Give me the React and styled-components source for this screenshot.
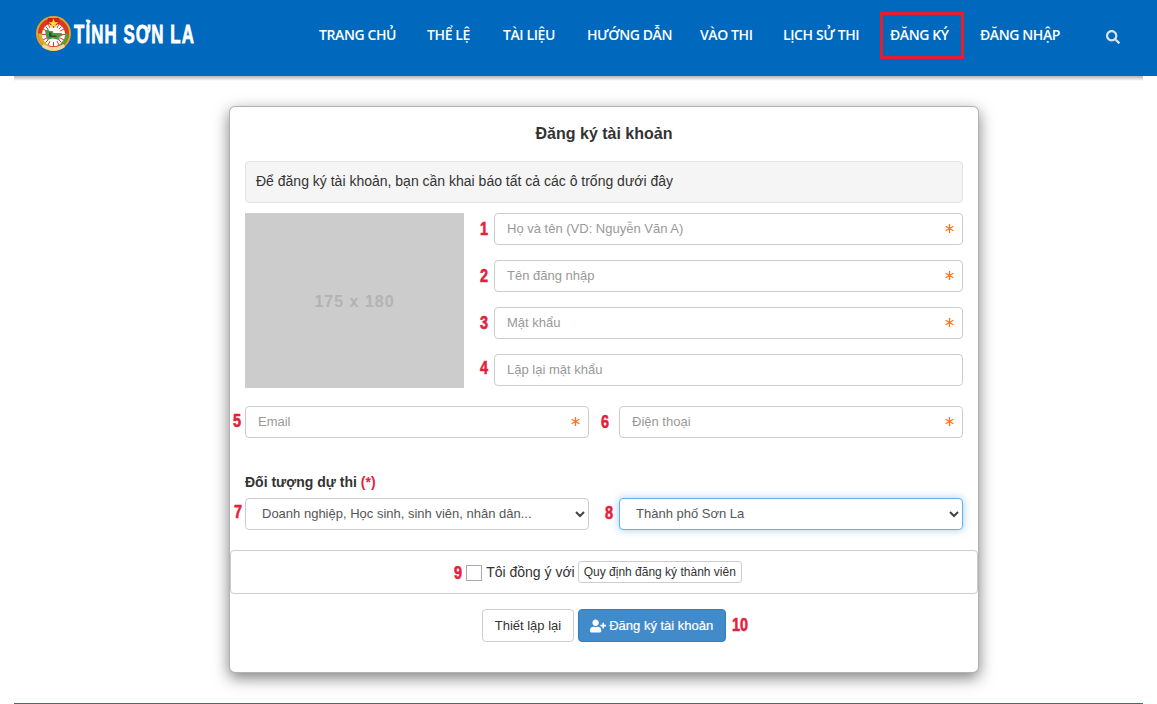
import React from "react";
import styled, { createGlobalStyle, css } from "styled-components";
import { FaSearch, FaUserPlus } from "react-icons/fa";

const Global = createGlobalStyle`
  html, body { margin: 0; padding: 0; background: #fff; }
  body { font-family: "Liberation Sans", Arial, sans-serif; font-size: 14px; color: #333; overflow: hidden; }
  *, *::before, *::after { box-sizing: border-box; }
`;

const Page = styled.div`
  width: 1157px;
  height: 704px;
  display: flex;
  flex-direction: column;
`;
const Header = styled.header`
  height: 76px;
  background: #0068bd;
  display: flex;
  align-items: flex-start;
  padding-left: 36px;
  flex: none;
`;
const Brand = styled.a`
  width: 283px;
  height: 76px;
  display: flex;
  align-items: flex-start;
  padding-top: 16px;
  flex: none;
`;
const BrandText = styled.span`
  display: inline-block;
  margin: 3px 0 0 3px;
  font: 700 25px/30px "Liberation Sans", Arial, sans-serif;
  color: #fff;
  letter-spacing: 1.6px;
  white-space: nowrap;
  transform: scaleX(0.675);
  transform-origin: left center;
  -webkit-text-stroke: 0.8px #fff;
`;
const Nav = styled.nav`
  display: flex;
  align-items: flex-start;
  padding-top: 25px;
`;
const NavItem = styled.a`
  position: relative;
  flex: none;
  width: ${(p) => p.$w}px;
  font: 600 14px/20px "Open Sans", sans-serif;
  letter-spacing: -0.4px;
  color: #fff;
  white-space: nowrap;
  ${(p) =>
    p.$marked &&
    css`
      &::after {
        content: "";
        position: absolute;
        left: -10px;
        width: 84px;
        top: -13px;
        height: 47px;
        border: 3px solid #e5202e;
      }
    `}
`;
const SearchBtn = styled.span`
  color: #d8e3ee;
  font-size: 14px;
  line-height: 0;
  margin: 5px 0 0 0;
`;
const Shade = styled.div`
  flex: none;
  margin: 0 14px;
  height: 5px;
  background: linear-gradient(#b4b4b4, #fff);
`;
const Main = styled.main`
  flex: 1;
  padding: 25px 0 0 229px;
`;
const Card = styled.section`
  width: 750px;
  height: 567px;
  background: #fff;
  border: 1px solid rgba(0, 0, 0, 0.3);
  border-radius: 6px;
  box-shadow: 0 5px 15px rgba(0, 0, 0, 0.5);
  padding: 17px 15px 0;
`;
const Title = styled.h2`
  margin: 0 0 17px;
  font: 700 16px/20px "Liberation Sans", Arial, sans-serif;
  color: #333;
  text-align: center;
`;
const Well = styled.div`
  height: 42px;
  background: #f5f5f5;
  border: 1px solid #e3e3e3;
  border-radius: 4px;
  padding: 0 10px;
  line-height: 38px;
  margin-bottom: 10px;
`;
const TopRow = styled.div`
  display: grid;
  grid-template-columns: 219px 1fr;
  column-gap: 30px;
`;
const Placeholder = styled.div`
  height: 175px;
  background: #ccc;
  color: #b3b3b3;
  font: 700 16px/177px "Liberation Sans", Arial, sans-serif;
  letter-spacing: 1px;
  text-align: center;
`;
const Stack = styled.div`
  display: flex;
  flex-direction: column;
  gap: 15px;
`;
const Field = styled.div`
  position: relative;
  height: 32px;
`;
const Mark = styled.span`
  position: absolute;
  top: ${(p) => p.$top ?? 6}px;
  ${(p) => (p.$after ? `left: calc(100% + ${p.$after}px);` : `right: calc(100% + ${p.$gap ?? 6}px);`)}
  color: #e5203c;
  font: 700 18px/20px "Liberation Sans", Arial, sans-serif;
  transform: scaleX(0.8);
  transform-origin: ${(p) => (p.$after ? "left" : "right")} center;
  -webkit-text-stroke: 0.6px #e5203c;
`;
const Input = styled.input`
  display: block;
  width: 100%;
  height: 32px;
  border: 1px solid #ccc;
  border-radius: 4px;
  padding: 0 12px 2px;
  font: 13px "Liberation Sans", Arial, sans-serif;
  color: #555;
  background: #fff;
  outline: none;
  &::placeholder { color: #999; opacity: 1; }
`;
const Req = styled.svg`
  position: absolute;
  right: 9px;
  top: 11px;
  width: 9px;
  height: 9px;
  stroke: #f5761f;
  stroke-width: 1.3;
`;
const TwoCols = styled.div`
  display: grid;
  grid-template-columns: 344px 344px;
  column-gap: 30px;
  margin-top: ${(p) => p.$mt}px;
`;
const Label = styled.div`
  margin-top: 34px;
  font: 700 14px/20px "Liberation Sans", Arial, sans-serif;
  color: #333;
  & > b { color: #e5203c; }
`;
const Select = styled.select`
  display: block;
  width: 100%;
  height: 32px;
  appearance: none;
  border: 1px solid ${(p) => (p.$active ? "#66afe9" : "#ccc")};
  border-radius: 4px;
  padding: 0 24px 1px 16px;
  font: 13px "Liberation Sans", Arial, sans-serif;
  color: #555;
  background: #fff;
  outline: none;
  ${(p) => p.$active && "box-shadow: 0 0 8px rgba(102, 175, 233, 0.6);"}
`;
const Caret = styled.svg`
  position: absolute;
  right: 4px;
  top: 13px;
  width: 10px;
  height: 7px;
  fill: none;
  stroke: #444;
  stroke-width: 2;
  pointer-events: none;
`;
const Panel = styled.div`
  margin: 20px -15px 0;
  height: 44px;
  border: 1px solid #ccc;
  border-radius: 4px;
  display: flex;
  align-items: center;
  justify-content: center;
`;
const Agree = styled.label`
  position: relative;
  display: flex;
  align-items: center;
  margin: 0 0 1px 0;
`;
const Check = styled.span`
  width: 16px;
  height: 16px;
  border: 1px solid #aaa;
  background: #fff;
  margin: 3px 4px 0 0;
`;
const RuleBtn = styled.button`
  height: 22px;
  margin-left: 3px;
  padding: 0 5px;
  background: #fff;
  border: 1px solid #ccc;
  border-radius: 3px;
  font: 12px "Liberation Sans", Arial, sans-serif;
  color: #333;
`;
const Actions = styled.div`
  margin-top: 15px;
  display: flex;
  justify-content: center;
  gap: 4px;
`;
const Btn = styled.button`
  position: relative;
  height: 33px;
  padding: 0 11.5px;
  border-radius: 4px;
  border: 1px solid ${(p) => (p.$primary ? "#357ebd" : "#ccc")};
  background: ${(p) => (p.$primary ? "#428bca" : "#fff")};
  color: ${(p) => (p.$primary ? "#fff" : "#333")};
  font: 13px "Liberation Sans", Arial, sans-serif;
  display: flex;
  align-items: center;
  gap: 3px;
  ${(p) => p.$primary && "-webkit-text-stroke: 0.2px #fff;"}
`;
const Footer = styled.div`
  flex: none;
  margin: 0 14px;
  height: 1px;
  background: #2d6cb0;
`;

const Emblem = () => (
  <svg width="35" height="35" viewBox="0 0 70 70" style={{ flex: "none" }}>
    <circle cx="35" cy="35" r="35" fill="#e0a526" />
    <circle cx="35" cy="35" r="31" fill="#d83a22" />
    <path d="M4 35a31 31 0 0 0 20 29l4-10A20 20 0 0 1 14 35z" fill="#d9b02d" />
    <path d="M66 35a31 31 0 0 1-20 29l-4-10A20 20 0 0 0 56 35z" fill="#5a9a3c" />
    <circle cx="35" cy="37" r="23" fill="#fff" />
    <g stroke="#d83a22" strokeWidth="2">
      <path d="M35 14v46M12 37h46M19 21l32 32M51 21L19 53M24 16l22 42M46 16L24 58M14 26l42 22M56 26L14 48" />
    </g>
    <circle cx="35" cy="37" r="15" fill="#fff" />
    <path d="M18 30l6-4 3 4h6l2 4h16l2 5-6 3v6l-14-3-10 3-3-8z" fill="#4d9b45" />
    <path d="M26 33h5v6h10v3H26z" fill="#27512c" />
    <path d="M15 56c12 8 28 8 40 0l3 6c-14 10-32 10-46 0z" fill="#f3d9a0" />
    <path d="M24 4h22l2 8-13 12-13-12z" fill="#d4201f" />
    <path d="M35 5l2.6 7.4H45l-6 4.6 2.2 7.4-6.2-4.4-6.2 4.4L31 17l-6-4.6h7.4z" fill="#f8e23a" />
  </svg>
);
const Star = () => (
  <Req viewBox="0 0 9 9">
    <path d="M4.5 0v9M.6 2.2l7.8 4.6M8.4 2.2L.6 6.8" />
  </Req>
);
const Chevron = () => (
  <Caret viewBox="0 0 10 7">
    <path d="M1 1l4 4 4-4" />
  </Caret>
);

const navItems = [
  ["TRANG CHỦ", 108],
  ["THỂ LỆ", 76],
  ["TÀI LIỆU", 84],
  ["HƯỚNG DẪN", 113],
  ["VÀO THI", 83],
  ["LỊCH SỬ THI", 107],
  ["ĐĂNG KÝ", 90],
  ["ĐĂNG NHẬP", 126],
];

export default function App() {
  return (
    <Page>
      <Global />
      <Header>
        <Brand>
          <Emblem />
          <BrandText>TỈNH SƠN LA</BrandText>
        </Brand>
        <Nav>
          {navItems.map(([n, w]) => (
            <NavItem key={n} $w={w} $marked={n === "ĐĂNG KÝ"}>{n}</NavItem>
          ))}
          <SearchBtn><FaSearch /></SearchBtn>
        </Nav>
      </Header>
      <Shade />
      <Main>
        <Card>
          <Title>Đăng ký tài khoản</Title>
          <Well>Để đăng ký tài khoản, bạn cần khai báo tất cả các ô trống dưới đây</Well>
          <TopRow>
            <Placeholder>175 x 180</Placeholder>
            <Stack>
              <Field>
                <Mark>1</Mark>
                <Input placeholder="Họ và tên (VD: Nguyễn Văn A)" />
                <Star />
              </Field>
              <Field>
                <Mark>2</Mark>
                <Input placeholder="Tên đăng nhập" />
                <Star />
              </Field>
              <Field>
                <Mark>3</Mark>
                <Input placeholder="Mật khẩu" />
                <Star />
              </Field>
              <Field>
                <Mark $top={4}>4</Mark>
                <Input placeholder="Lặp lại mật khẩu" />
              </Field>
            </Stack>
          </TopRow>
          <TwoCols $mt={18}>
            <Field>
              <Mark $gap={4} $top={5}>5</Mark>
              <Input placeholder="Email" />
              <Star />
            </Field>
            <Field>
              <Mark $gap={10}>6</Mark>
              <Input placeholder="Điện thoại" />
              <Star />
            </Field>
          </TwoCols>
          <Label>Đối tượng dự thi <b>(*)</b></Label>
          <TwoCols $mt={6}>
            <Field>
              <Mark $gap={3} $top={4}>7</Mark>
              <Select defaultValue="a">
                <option value="a">Doanh nghiệp, Học sinh, sinh viên, nhân dân...</option>
              </Select>
              <Chevron />
            </Field>
            <Field>
              <Mark $gap={6} $top={5}>8</Mark>
              <Select $active defaultValue="b">
                <option value="b">Thành phố Sơn La</option>
              </Select>
              <Chevron />
            </Field>
          </TwoCols>
          <Panel>
            <Agree>
              <Mark $gap={4} $top={2}>9</Mark>
              <Check />
              Tôi đồng ý với
              <RuleBtn type="button">Quy định đăng ký thành viên</RuleBtn>
            </Agree>
          </Panel>
          <Actions>
            <Btn type="button">Thiết lập lại</Btn>
            <Btn type="button" $primary>
              <FaUserPlus size={16} />
              Đăng ký tài khoản
              <Mark $after={7} $top={5}>10</Mark>
            </Btn>
          </Actions>
        </Card>
      </Main>
      <Footer />
    </Page>
  );
}
